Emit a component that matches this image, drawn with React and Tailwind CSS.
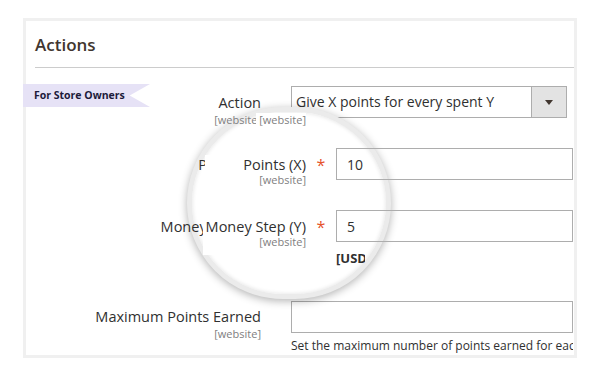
export default function App() {
  const label = "text-[14.5px] leading-[20px] text-[#303030] whitespace-nowrap";
  const web = "text-[11px] leading-[13px] text-[#808080] whitespace-nowrap";
  const webTight = "text-[11px] leading-[10px] text-[#808080] whitespace-nowrap";
  return (
    <div className="w-[600px] h-[375px] bg-white overflow-hidden font-['Open_Sans',sans-serif] pt-[18px] pl-[23px]">
      <div className="relative w-[554px] h-[340px] border-[3px] border-[#f0f0f0] flex flex-col">
        <h2 className="pl-[9px] pt-[12px] text-[17px] leading-[24px] font-semibold text-[#41362f]">Actions</h2>
        <div className="ml-[9px] mt-[10px] h-px bg-[#cccccc]" />

        {/* badge */}
        <div className="absolute left-[-3px] top-[63px] z-30 h-[23px] w-[127px] bg-[#e6e2f6] [clip-path:polygon(0_0,100%_0,84%_50%,100%_100%,0_100%)] flex items-center pl-[11px] text-[10.5px] font-bold text-[#1d1a3a] whitespace-nowrap">
          For Store Owners
        </div>

        {/* magnifier */}
        <div className="absolute left-[161px] top-[86px] z-10 w-[204px] h-[192px] rounded-full bg-white border-[5px] border-[#ebebeb] shadow-[0_2px_9px_rgba(0,0,0,0.3),inset_0_0_4px_rgba(0,0,0,0.12)]" />

        {/* Row 1: Action */}
        <div className="mt-[18px] h-[32px] flex items-start">
          <div className="grid w-[235px] shrink-0">
            <div className="col-start-1 row-start-1 relative z-20 text-right pt-[7px]">
              <div className={label}>Action</div>
              <div className={web}>[website]</div>
            </div>
            <div className="col-start-1 row-start-1 relative z-20 justify-self-end self-start -mr-[45px] mt-[27px] pl-[3px] bg-white text-right">
              <div className={web}>[website]</div>
            </div>
          </div>
          <div className="ml-[30px] w-[276px] h-[32px] border border-[#adadad] flex">
            <div className="flex-1 pl-[4px] flex items-center text-[14px] leading-[20px] text-[#303030] whitespace-nowrap">
              Give X points for every spent Y
            </div>
            <div className="w-[35px] bg-[#e3e3e3] border-l border-[#adadad] flex items-center justify-center">
              <svg width="8" height="5" viewBox="0 0 8 5">
                <polygon points="0,0 8,0 4,5" fill="#41362f" />
              </svg>
            </div>
          </div>
        </div>

        {/* Row 2: Points (X) */}
        <div className="mt-[30px] h-[32px] flex items-start">
          <div className="grid w-[235px] shrink-0">
            <div className="col-start-1 row-start-1 relative z-20 text-right pt-[7px]">
              <div className={label}>Points (X)</div>
              <div className={web}>[website]</div>
            </div>
            <div className="col-start-1 row-start-1 relative z-20 justify-self-end self-start -mr-[45px] mt-[7px] w-[101px] bg-white text-right pb-[8px]">
              <div className={label}>Points (X)</div>
              <div className={webTight}>[website]</div>
            </div>
          </div>
          <div className="ml-[45px] w-[30px] shrink-0 relative z-20 text-center pt-[7px] text-[16px] leading-[20px] text-[#e5532b]">*</div>
          <div className="flex-1 mr-[1px] relative z-20 h-[32px] border border-[#adadad] pl-[10px] flex items-center text-[14px] text-[#303030]">10</div>
        </div>

        {/* Row 3: Money Step (Y) */}
        <div className="mt-[30px] h-[57px] flex items-start">
          <div className="grid w-[235px] shrink-0">
            <div className="col-start-1 row-start-1 relative z-20 text-right pt-[7px]">
              <div className={label}>Money Step (Y)</div>
              <div className={web}>[website]</div>
            </div>
            <div className="col-start-1 row-start-1 relative z-20 justify-self-end self-start -mr-[45px] mt-[7px] w-[103px] bg-white text-right pb-[8px]">
              <div className={label}>Money Step (Y)</div>
              <div className={webTight}>[website]</div>
            </div>
          </div>
          <div className="ml-[45px] w-[30px] shrink-0 relative z-20 text-center pt-[7px] text-[16px] leading-[20px] text-[#e5532b]">*</div>
          <div className="flex-1 mr-[1px] relative z-20 flex flex-col">
            <div className="h-[32px] border border-[#adadad] pl-[10px] flex items-center text-[14px] text-[#303030]">5</div>
            <div className="mt-[7px] w-[29px] overflow-hidden whitespace-nowrap text-[13px] leading-[18px] font-bold text-[#303030]">[USD]</div>
          </div>
        </div>

        {/* Row 4: Maximum Points Earned */}
        <div className="mt-[34px] flex items-start">
          <div className="w-[235px] shrink-0 text-right pt-[6px]">
            <div className={label}>Maximum Points Earned</div>
            <div className={web}>[website]</div>
          </div>
          <div className="ml-[30px] flex-1 min-w-0 mr-[1px]">
            <div className="h-[32px] border border-[#adadad]" />
            <div className="mt-[5px] h-[17px] overflow-hidden whitespace-nowrap text-[12px] leading-[16px] text-[#303030]">
              Set the maximum number of points earned for each order
            </div>
          </div>
        </div>
      </div>
    </div>
  );
}
